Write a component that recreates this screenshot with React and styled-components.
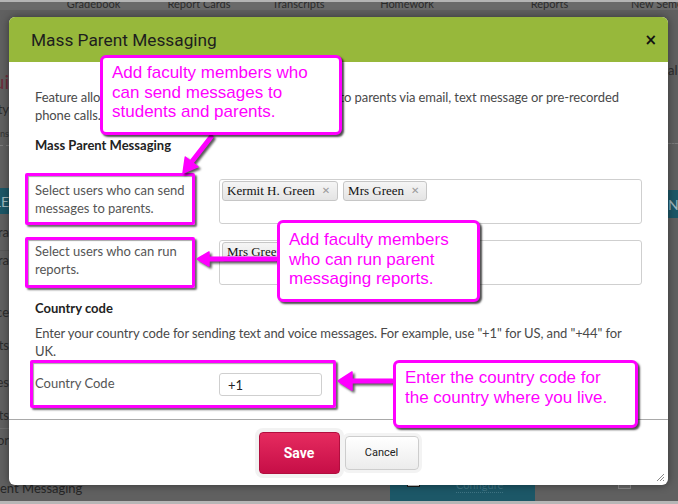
import React from 'react'
import styled, { createGlobalStyle } from 'styled-components'

const magenta = '#ff00ff'
const bodyFont = `Lato, "Open Sans", sans-serif`

const GlobalStyle = createGlobalStyle`
  html, body { margin: 0; padding: 0; background: #606060; }
  * { box-sizing: border-box; }
`

const Page = styled.div`
  position: relative;
  width: 678px;
  height: 504px;
  overflow: hidden;
  background: #606060;
  font-family: ${bodyFont};
  display: flex;
  flex-direction: column;
`

/* ---- the page behind the dialog ---- */

const TopNav = styled.div`
  flex: none;
  height: 10px;
  display: flex;
  padding-left: 40px;
  border-top: 2px solid #b4b4b4;
  background: #6a6a6a;
  overflow: hidden;
`

const NavTab = styled.div`
  flex: none;
  width: ${p => p.$w}px;
  text-align: ${p => (p.$left ? 'left' : 'center')};
  font-size: 11px;
  line-height: 4px;
  color: #2a2a2a;
  white-space: nowrap;
`

const BgMain = styled.div`
  flex: 1;
  display: flex;
  justify-content: space-between;
`

const Rail = styled.div`
  width: ${p => p.$w}px;
  display: flex;
  flex-direction: column;
`

const RailCell = styled.div`
  flex: none;
  height: ${p => p.$h}px;
  display: flex;
  align-items: center;
  justify-content: ${p => (p.$end ? 'flex-end' : 'flex-start')};
  overflow: hidden;
  white-space: nowrap;
  font-size: ${p => p.$size || 13}px;
  color: ${p => p.$color || '#2c2c2c'};
  background: ${p => (p.$teal ? '#1c5767' : 'transparent')};
  border-bottom: ${p => p.$line || 'none'};
`

const BgBottom = styled.div`
  flex: none;
  height: 26px;
  display: flex;
  align-items: stretch;
  border-bottom: 3px solid #b6b6b6;
`

const BgText = styled.div`
  width: 390px;
  padding-top: 2px;
  font-size: 13px;
  color: #262626;
  white-space: nowrap;
`

const TealCell = styled.div`
  width: 145px;
  display: flex;
  align-items: flex-start;
  padding: 0 0 0 17px;
  gap: 36px;
  background: #1c5767;
`

const BgCheck = styled.div`
  width: 13px;
  height: ${p => p.$h}px;
  border: 1px solid ${p => p.$border};
  background: ${p => p.$bg};
  margin-left: ${p => p.$ml || 0}px;
`

const Configure = styled.span`
  font-size: 11px;
  line-height: 14px;
  color: #3f7585;
  border-bottom: 1px dotted #3f7585;
`

/* ---- dialog ---- */

const Modal = styled.div`
  position: absolute;
  left: 9px;
  top: 17px;
  width: 659px;
  height: 468px;
  background: #fff;
  border-radius: 6px;
  box-shadow: 0 0 8px rgba(0, 0, 0, 0.45);
  display: flex;
  flex-direction: column;
  overflow: hidden;
`

const Header = styled.div`
  flex: none;
  height: 45px;
  display: flex;
  align-items: center;
  justify-content: space-between;
  padding: 0 11px 0 22px;
  background: #97b83b;
`

const Title = styled.h2`
  margin: 0;
  font-family: Roboto, sans-serif;
  font-weight: 400;
  font-size: 17.3px;
  color: #1e1e1e;
`

const Close = styled.span`
  font-family: "DejaVu Sans", sans-serif;
  font-weight: 700;
  font-size: 15px;
  color: #111;
`

const Body = styled.div`
  flex: 1;
  padding: 26px 26px 0;
  font-size: 13px;
  line-height: 18px;
  color: #4a4a4a;
`

const Para = styled.p`
  margin: ${p => p.$mt || 0}px 0 ${p => p.$mb || 0}px;
  letter-spacing: -0.1px;
  white-space: nowrap;
`

const SectionTitle = styled.h3`
  margin: ${p => p.$mt || 0}px 0 0;
  font-size: 13px;
  line-height: 18px;
  font-weight: 700;
  color: #222;
`

const FieldRow = styled.div`
  display: flex;
  margin-top: ${p => p.$mt}px;
`

const FieldLabel = styled.div`
  flex: none;
  width: 184px;
  padding-top: ${p => p.$pt}px;
  color: #555;
`

const TagBox = styled.div`
  flex: 1;
  height: 45px;
  display: flex;
  align-items: flex-start;
  gap: 5px;
  padding: 1px 2px;
  border: 1px solid #cfcfcf;
  border-radius: 3px;
`

const Tag = styled.span`
  display: inline-flex;
  align-items: center;
  gap: 7px;
  height: 20px;
  padding: 0 7px 0 4px;
  border: 1px solid #c6c6c6;
  border-radius: 3px;
  background: linear-gradient(#f5f5f5, #e4e4e4);
  font-family: "Liberation Serif", serif;
  font-size: 13px;
  color: #111;
`

const TagX = styled.span`
  font-family: "DejaVu Sans", sans-serif;
  font-weight: 700;
  font-size: 10px;
  color: #9a9a9a;
`

const TextInput = styled.input`
  width: 103px;
  height: 23px;
  padding: 0 8px;
  border: 1px solid #cfcfcf;
  border-radius: 3px;
  font-family: ${bodyFont};
  font-size: 13px;
  color: #222;
  outline: none;
`

const Footer = styled.div`
  flex: none;
  height: 66px;
  display: flex;
  align-items: center;
  justify-content: center;
  gap: 5px;
  border-top: 1px solid #a9a9a9;
`

const SaveButton = styled.button`
  width: 81px;
  height: 42px;
  border: 1px solid #b10e3e;
  border-radius: 4px;
  background: linear-gradient(#e62b5f, #c60e47);
  box-shadow: 0 0 0 4px #f2f2f2;
  font-family: Roboto, sans-serif;
  font-weight: 700;
  font-size: 14px;
  color: #fff;
`

const CancelButton = styled.button`
  width: 74px;
  height: 34px;
  border: 1px solid #cdcdcd;
  border-radius: 4px;
  background: linear-gradient(#ffffff, #ececec);
  box-shadow: 0 0 0 3px #f3f3f3;
  font-family: Roboto, sans-serif;
  font-size: 11px;
  color: #222;
`

const Grip = styled.svg`
  position: absolute;
  right: 3px;
  bottom: 3px;
`

/* ---- annotations drawn over the screenshot ---- */

const Callout = styled.div`
  position: absolute;
  left: ${p => p.$x}px;
  top: ${p => p.$y}px;
  width: ${p => p.$w}px;
  height: ${p => p.$h}px;
  padding: ${p => p.$pt}px 0 0 9px;
  border: 3px solid ${magenta};
  border-radius: 6px;
  background: #fff;
  box-shadow: 2px 2px 2px rgba(0, 0, 0, 0.7);
  font-family: "Liberation Sans", Arial, sans-serif;
  font-size: 17px;
  line-height: 19.5px;
  color: ${magenta};
  white-space: nowrap;
`

const Highlight = styled.div`
  position: absolute;
  left: ${p => p.$x}px;
  top: ${p => p.$y}px;
  width: ${p => p.$w}px;
  height: ${p => p.$h}px;
  border: 3px solid ${magenta};
  border-radius: 2px;
  box-shadow: 2px 2px 2px rgba(0, 0, 0, 0.6), inset 1px 1px 1px rgba(0, 0, 0, 0.35);
`

const ArrowLayer = styled.svg`
  position: absolute;
  left: 0;
  top: 0;
  pointer-events: none;
  filter: drop-shadow(2px 2px 1px rgba(0, 0, 0, 0.65));
`

function Arrow({ from, tip, head = 13, half = 8 }) {
  const dx = tip[0] - from[0]
  const dy = tip[1] - from[1]
  const len = Math.hypot(dx, dy)
  const ux = dx / len
  const uy = dy / len
  const bx = tip[0] - ux * head
  const by = tip[1] - uy * head
  const nx = -uy
  const ny = ux
  const pts = [
    [tip[0], tip[1]],
    [bx + nx * half, by + ny * half],
    [bx - nx * half, by - ny * half],
  ]
    .map(p => p.join(','))
    .join(' ')
  return (
    <g>
      <line x1={from[0]} y1={from[1]} x2={bx + ux * 2} y2={by + uy * 2} stroke={magenta} strokeWidth="5" strokeLinecap="round" />
      <polygon points={pts} fill={magenta} stroke={magenta} strokeWidth="1.5" strokeLinejoin="round" />
    </g>
  )
}

const leftRail = [
  { h: 61 },
  { h: 20, t: 'Qui', size: 19, color: '#6d2c3a' },
  { h: 35, t: 'ty' },
  { h: 14, t: 'Trans', size: 9, color: '#333' },
  { h: 6, line: '1px dashed #7c7c7c' },
  { h: 42 },
  { h: 26, t: 'LE', teal: true, color: '#9fb8bf', size: 14 },
  { h: 37, t: 'Extra', line: '1px solid #575757' },
  { h: 18, t: 'Extra' },
  { h: 28 },
  { h: 30, t: 'Attendance' },
  { h: 36, t: 'Transcripts' },
  { h: 38, t: 'Fees' },
  { h: 28, t: 'Reports', line: '1px solid #6f6f6f' },
  { h: 22, t: 'Senior' },
]

const rightRail = [
  { h: 50 },
  { h: 20, t: 'all' },
  { h: 64, line: '1px dashed #7c7c7c' },
  { h: 46 },
  { h: 28, t: 'N', teal: true, color: '#9fb8bf', size: 14 },
]

export default function App() {
  return (
    <Page>
      <GlobalStyle />
      <TopNav>
        <NavTab $w={107}>Gradebook</NavTab>
        <NavTab $w={104}>Report Cards</NavTab>
        <NavTab $w={95}>Transcripts</NavTab>
        <NavTab $w={122}>Homework</NavTab>
        <NavTab $w={163}>Reports</NavTab>
        <NavTab $w={80} $left>New Semester</NavTab>
      </TopNav>

      <BgMain>
        <Rail $w={9}>
          {leftRail.map((c, i) => (
            <RailCell key={i} $h={c.h} $end $size={c.size} $color={c.color} $teal={c.teal} $line={c.line}>
              {c.t}
            </RailCell>
          ))}
        </Rail>
        <Rail $w={10}>
          {rightRail.map((c, i) => (
            <RailCell key={i} $h={c.h} $size={c.size} $color={c.color} $teal={c.teal} $line={c.line}>
              {c.t}
            </RailCell>
          ))}
        </Rail>
      </BgMain>

      <BgBottom>
        <BgText>ent Messaging</BgText>
        <TealCell>
          <BgCheck $h={9} $border="#1a1a1a" $bg="#d8d8d8" />
          <Configure>Configure</Configure>
        </TealCell>
        <BgCheck $h={11} $border="#8a8a8a" $bg="#6a6a6a" $ml={83} />
      </BgBottom>

      <Modal>
        <Header>
          <Title>Mass Parent Messaging</Title>
          <Close>×</Close>
        </Header>

        <Body>
          <Para $mb={12}>
            Feature allows staff to send messages to students and to parents via email, text message or pre-recorded
            <br />
            phone calls.
          </Para>
          <SectionTitle>Mass Parent Messaging</SectionTitle>

          <FieldRow $mt={25}>
            <FieldLabel $pt={2}>
              Select users who can send
              <br />
              messages to parents.
            </FieldLabel>
            <TagBox>
              <Tag>
                Kermit H. Green <TagX>✕</TagX>
              </Tag>
              <Tag>
                Mrs Green <TagX>✕</TagX>
              </Tag>
            </TagBox>
          </FieldRow>

          <FieldRow $mt={16}>
            <FieldLabel $pt={2}>
              Select users who can run
              <br />
              reports.
            </FieldLabel>
            <TagBox>
              <Tag>
                Mrs Green <TagX>✕</TagX>
              </Tag>
            </TagBox>
          </FieldRow>

          <SectionTitle $mt={14}>Country code</SectionTitle>
          <Para $mt={7}>
            Enter your country code for sending text and voice messages. For example, use "+1" for US, and "+44" for
            <br />
            UK.
          </Para>

          <FieldRow $mt={13}>
            <FieldLabel $pt={1}>Country Code</FieldLabel>
            <TextInput readOnly value="+1" />
          </FieldRow>
        </Body>

        <Footer>
          <SaveButton>Save</SaveButton>
          <CancelButton>Cancel</CancelButton>
        </Footer>

        <Grip width="10" height="10" viewBox="0 0 10 10">
          <path d="M9 2 L2 9 M9 5 L5 9 M9 8 L8 9" stroke="#8a8a8a" strokeWidth="1" fill="none" />
        </Grip>
      </Modal>

      <Highlight $x={25} $y={173} $w={170} $h={52} />
      <Highlight $x={25} $y={237} $w={170} $h={51} />
      <Highlight $x={30} $y={360} $w={306} $h={48} />

      <ArrowLayer width="678" height="504" viewBox="0 0 678 504">
        <Arrow from={[211, 137]} tip={[183, 173]} head={14} half={8} />
        <Arrow from={[276, 259]} tip={[197, 259]} head={12} half={7} />
        <Arrow from={[392, 381]} tip={[338, 381]} head={14} half={9} />
      </ArrowLayer>

      <Callout $x={100} $y={55} $w={242} $h={80} $pt={5}>
        Add faculty members who
        <br />
        can send messages to
        <br />
        students and parents.
      </Callout>

      <Callout $x={277} $y={220} $w={203} $h={82} $pt={7}>
        Add faculty members
        <br />
        who can run parent
        <br />
        messaging reports.
      </Callout>

      <Callout $x={393} $y={360} $w={245} $h={68} $pt={5}>
        Enter the country code for
        <br />
        the country where you live.
      </Callout>
    </Page>
  )
}
